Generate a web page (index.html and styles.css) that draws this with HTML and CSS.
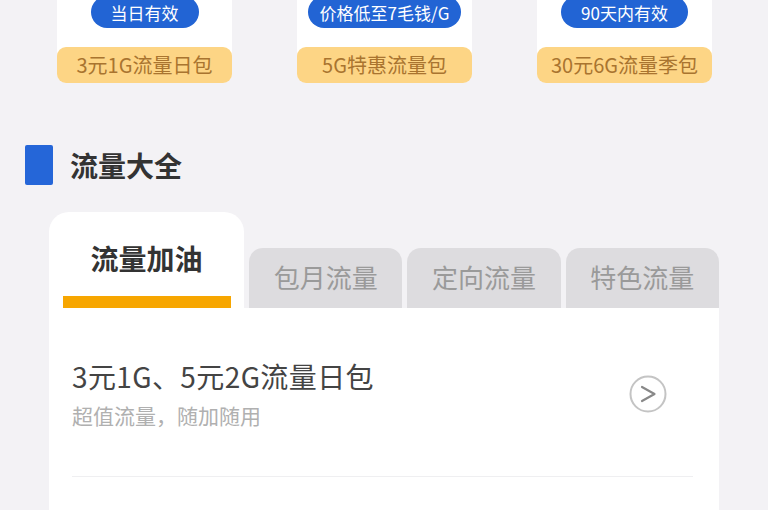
FILE: index.html
```html
<!DOCTYPE html>
<html lang="zh-CN">
<head>
<meta charset="utf-8">
<title>流量大全</title>
<link rel="stylesheet" href="styles.css">
</head>
<body>
<div class="page">
  <div class="cards">
    <div class="card">
      <div class="pill">当日有效</div>
      <div class="band">3元1G流量日包</div>
    </div>
    <div class="card">
      <div class="pill">价格低至7毛钱/G</div>
      <div class="band">5G特惠流量包</div>
    </div>
    <div class="card">
      <div class="pill">90天内有效</div>
      <div class="band">30元6G流量季包</div>
    </div>
  </div>

  <div class="section-title">
    <span class="bar"></span>
    <h2>流量大全</h2>
  </div>

  <div class="panel">
    <div class="tabs">
      <div class="tab active"><span>流量加油</span><i class="underline"></i></div>
      <div class="tab">包月流量</div>
      <div class="tab">定向流量</div>
      <div class="tab">特色流量</div>
    </div>
    <div class="list">
      <div class="item">
        <div class="item-text">
          <div class="item-title">3元1G、5元2G流量日包</div>
          <div class="item-sub">超值流量，随加随用</div>
        </div>
        <svg class="go" width="38" height="38" viewBox="0 0 38 38">
          <circle cx="19" cy="19" r="17.5" fill="none" stroke="#c4c4c4" stroke-width="2"/>
          <path d="M13 12 L25.5 19 L13 26" fill="none" stroke="#888888" stroke-width="2.2" stroke-linecap="round" stroke-linejoin="round"/>
        </svg>
      </div>
      <div class="divider"></div>
    </div>
  </div>
</div>
</body>
</html>
```

FILE: styles.css
```css
html, body {
  margin: 0;
  padding: 0;
  background: #f3f2f5;
  font-family: "Noto Sans CJK SC", "Noto Sans", sans-serif;
  overflow: hidden;
}
.page {
  width: 768px;
  height: 510px;
  overflow: hidden;
}
.cards {
  display: flex;
  gap: 65px;
  padding-left: 57px;
  margin-top: -4px;
}
.card {
  width: 175px;
  background: #ffffff;
  border-radius: 0 0 10px 10px;
  display: flex;
  flex-direction: column;
  align-items: center;
}
.pill {
  height: 32px;
  box-sizing: border-box;
  padding: 2px 20px 0;
  background: #2264d4;
  color: #ffffff;
  border-radius: 16px;
  font-size: 17px;
  line-height: 30px;
  white-space: nowrap;
}
.card:nth-child(2) .pill {
  padding: 2px 12px 0;
}
.band {
  margin-top: 19px;
  align-self: stretch;
  height: 36px;
  background: #fdd585;
  border-radius: 9px;
  color: #a9742f;
  font-size: 20px;
  line-height: 36px;
  text-align: center;
}
.section-title {
  display: flex;
  align-items: center;
  gap: 17px;
  margin: 62px 0 0 25px;
  height: 40px;
}
.bar {
  width: 28px;
  height: 40px;
  background: #2566d8;
  border-radius: 2px;
}
.section-title h2 {
  margin: 0;
  font-size: 28px;
  font-weight: 700;
  color: #333333;
  line-height: 40px;
}
.panel {
  margin: 27px 0 0 49px;
  width: 670px;
}
.tabs {
  display: flex;
  align-items: flex-end;
  gap: 5px;
}
.tab {
  flex: 1;
  height: 60px;
  background: #dddcdf;
  border-radius: 14px 14px 0 0;
  color: #9a9a9a;
  font-size: 26px;
  line-height: 58px;
  text-align: center;
}
.tab.active {
  flex: 0 0 195px;
  height: 96px;
  background: #ffffff;
  border-radius: 20px 20px 0 0;
  color: #333333;
  font-size: 28px;
  font-weight: 700;
  display: flex;
  flex-direction: column;
  align-items: center;
  justify-content: space-between;
  padding-top: 28px;
  box-sizing: border-box;
  line-height: 36px;
}
.underline {
  display: block;
  width: 168px;
  height: 12px;
  background: #f7a600;
}
.list {
  background: #ffffff;
  padding: 0 26px 0 23px;
  height: 220px;
}
.item {
  display: flex;
  align-items: center;
  justify-content: space-between;
  height: 168px;
}
.item-text {
  display: flex;
  flex-direction: column;
  gap: 8px;
  padding-top: 2px;
}
.item-title {
  font-size: 28px;
  letter-spacing: 0.4px;
  color: #444444;
  line-height: 36px;
}
.item-sub {
  font-size: 21px;
  color: #b0b0b0;
  line-height: 26px;
}
.go {
  margin-right: 26px;
  margin-top: 4px;
}
.divider {
  height: 1px;
  background: #efeff1;
}
```
